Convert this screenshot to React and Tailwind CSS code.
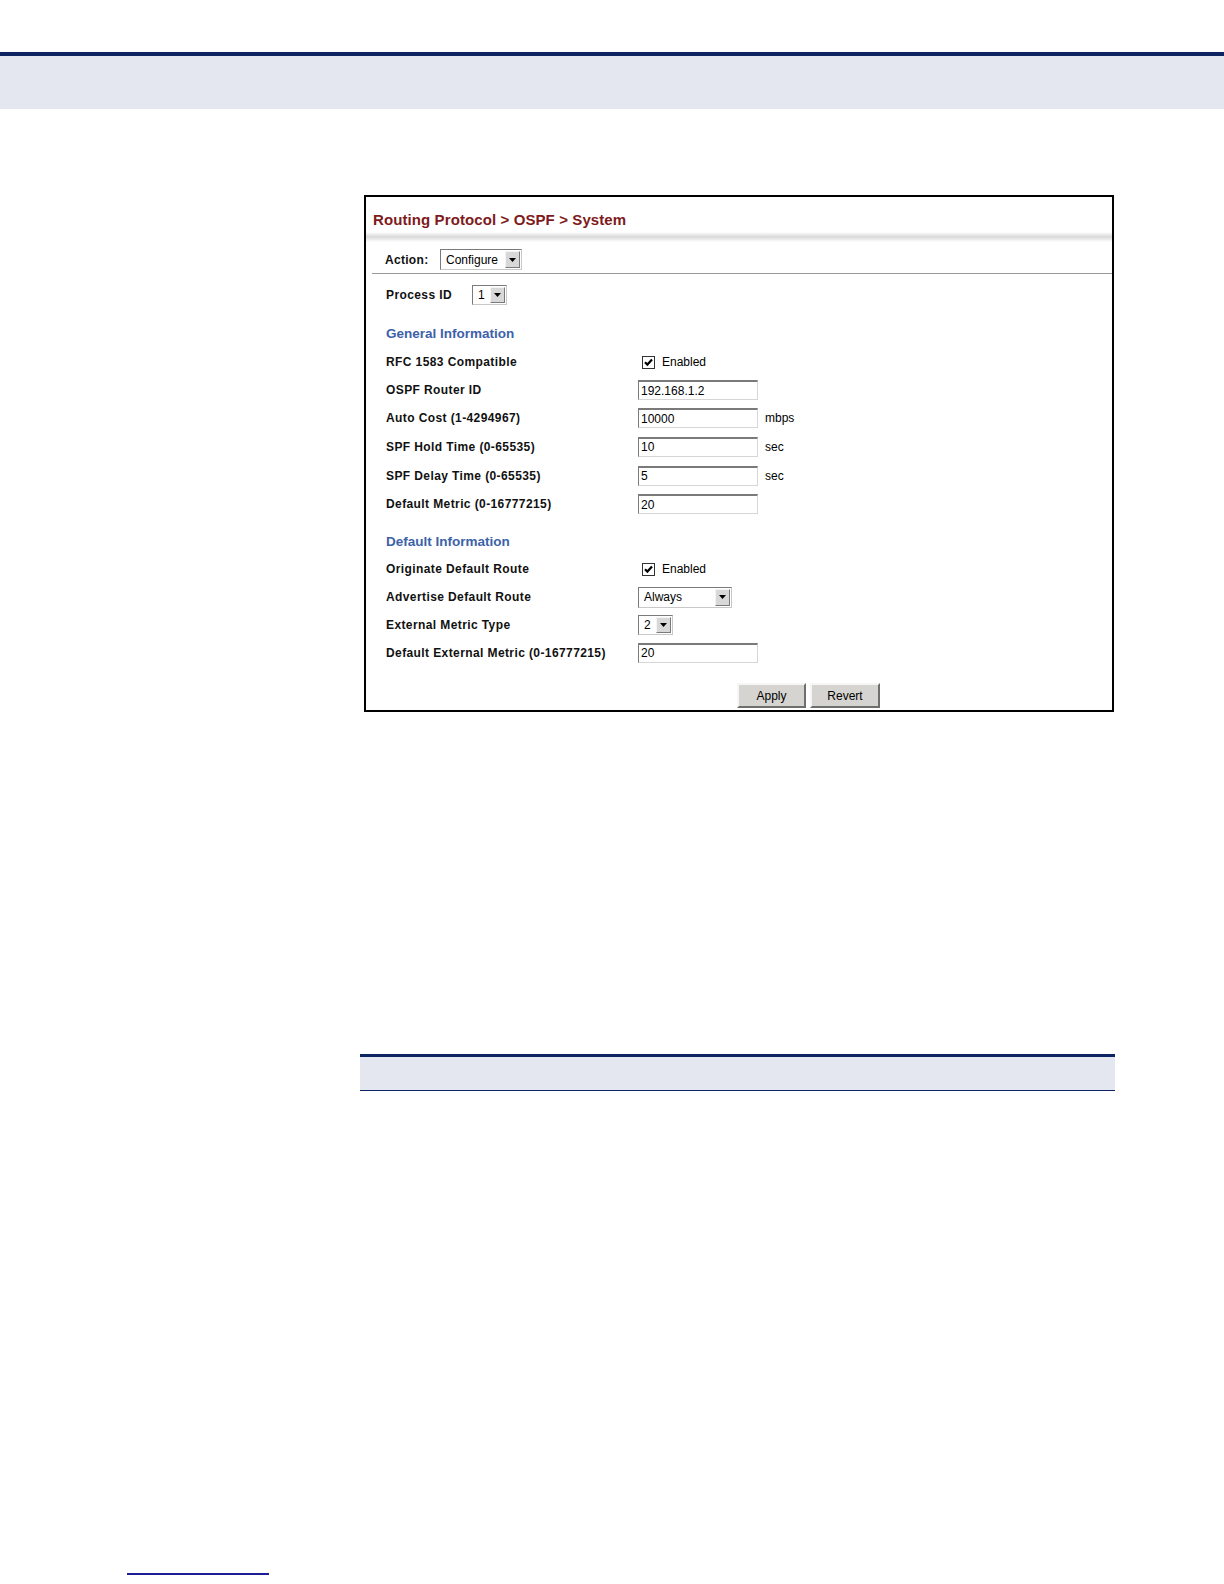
import React from "react";

const font = { fontFamily: '"Liberation Sans", Arial, sans-serif' };

function Arrow() {
  return (
    <div className="flex h-full w-[15px] items-center justify-center border border-t-[#f4f4f4] border-l-[#f4f4f4] border-r-[#7a7a7a] border-b-[#7a7a7a] bg-[#d8d8d8]">
      <svg width="7" height="4" viewBox="0 0 7 4">
        <path d="M0 0 L7 0 L3.5 4 Z" fill="#000" />
      </svg>
    </div>
  );
}

function Select({ value, width }) {
  return (
    <div
      className="flex h-full items-stretch border border-t-[#7a7a7a] border-l-[#7a7a7a] border-r-[#c8c8c8] border-b-[#c8c8c8] bg-white p-[1px]"
      style={{ width }}
    >
      <div className="flex flex-1 items-center pl-[4px] text-[12px] text-black">{value}</div>
      <Arrow />
    </div>
  );
}

function Input({ value }) {
  return (
    <div className="flex h-[20px] w-[120px] items-center border border-t-2 border-t-[#7a7a7a] border-l-[#7a7a7a] border-r-[#d6d6d6] border-b-[#d6d6d6] bg-white pl-[2px] text-[12px] text-black">
      {value}
    </div>
  );
}

function Check() {
  return (
    <div className="flex items-center">
      <div className="ml-[4px] flex h-[13px] w-[13px] items-center justify-center border border-[#333] bg-white">
        <svg width="9" height="9" viewBox="0 0 9 9">
          <path d="M1 4.2 L3.4 6.6 L8 1.6" stroke="#000" strokeWidth="2.2" fill="none" />
        </svg>
      </div>
      <span className="ml-[7px] text-[12px] text-black">Enabled</span>
    </div>
  );
}

function Row({ label, h, children, unit }) {
  return (
    <div className="flex items-center" style={{ height: h }}>
      <div className="w-[272px] pl-[20px] text-[12px] font-bold tracking-[0.4px] text-[#111]">{label}</div>
      <div className="flex items-center">
        {children}
        {unit && <span className="ml-[7px] text-[12px] text-black">{unit}</span>}
      </div>
    </div>
  );
}

function Button({ children, w }) {
  return (
    <div
      className="flex h-[25px] items-center justify-center border-2 border-t-[#f6f6f6] border-l-[#f6f6f6] border-r-[#6e6e6e] border-b-[#6e6e6e] bg-[#d6d4d0] text-[12px] text-black"
      style={{ width: w }}
    >
      {children}
    </div>
  );
}

export default function App() {
  return (
    <div className="relative h-[1584px] w-[1224px] bg-white" style={font}>
      <div className="pt-[52px]">
        <div className="h-[4px] bg-[#0c2462]" />
        <div className="h-[53px] bg-[#e4e7ef]" />
      </div>

      <div className="ml-[364px] mt-[86px] w-[750px] border-2 border-black bg-white">
        <div className="h-[35px] pl-[7px] pt-[15px] text-[15px] font-bold leading-[16px] tracking-[0.1px] text-[#7e1a1c]">
          Routing Protocol &gt; OSPF &gt; System
        </div>
        <div className="h-[10px] bg-gradient-to-b from-white via-[#d9d9d9] to-white" />

        <div className="mt-[7px] flex h-[21px] items-center">
          <div className="w-[74px] pl-[19px] text-[12px] font-bold tracking-[0.3px] text-[#111]">Action:</div>
          <Select value="Configure" width={82} />
        </div>
        <div className="ml-[6px] mt-[3px] h-[1px] bg-[#9a9a9a]" />

        <div className="mt-[11px] flex h-[20px] items-center">
          <div className="w-[106px] pl-[20px] text-[12px] font-bold tracking-[0.4px] text-[#111]">Process ID</div>
          <Select value="1" width={35} />
        </div>

        <div className="mt-[21px] pl-[20px] text-[13.5px] font-bold leading-[16px] text-[#3d62a8]">
          General Information
        </div>
        <div className="mt-[6px]">
          <Row label="RFC 1583 Compatible" h={28}>
            <Check />
          </Row>
          <Row label="OSPF Router ID" h={28}>
            <Input value="192.168.1.2" />
          </Row>
          <Row label="Auto Cost (1-4294967)" h={28} unit="mbps">
            <Input value="10000" />
          </Row>
          <Row label="SPF Hold Time (0-65535)" h={29} unit="sec">
            <Input value="10" />
          </Row>
          <Row label="SPF Delay Time (0-65535)" h={29} unit="sec">
            <Input value="5" />
          </Row>
          <Row label="Default Metric (0-16777215)" h={28}>
            <Input value="20" />
          </Row>
        </div>

        <div className="mt-[16px] pl-[20px] text-[13.5px] font-bold leading-[16px] text-[#3d62a8]">
          Default Information
        </div>
        <div className="mt-[5px]">
          <Row label="Originate Default Route" h={28}>
            <Check />
          </Row>
          <Row label="Advertise Default Route" h={28}>
            <div className="h-[21px]">
              <Select value="Always" width={94} />
            </div>
          </Row>
          <Row label="External Metric Type" h={27}>
            <div className="h-[20px]">
              <Select value="2" width={35} />
            </div>
          </Row>
          <Row label="Default External Metric (0-16777215)" h={29}>
            <Input value="20" />
          </Row>
        </div>

        <div className="mb-[2px] mt-[16px] flex gap-[4px] pl-[371px]">
          <Button w={69}>Apply</Button>
          <Button w={70}>Revert</Button>
        </div>
      </div>

      <div className="ml-[360px] mt-[342px] w-[755px]">
        <div className="h-[3px] bg-[#0c2462]" />
        <div className="h-[33px] bg-[#e4e7ef]" />
        <div className="h-[1px] bg-[#0c2462]" />
      </div>

      <div className="ml-[127px] mt-[482px] h-[2px] w-[142px] bg-[#1c1c94]" />
    </div>
  );
}
